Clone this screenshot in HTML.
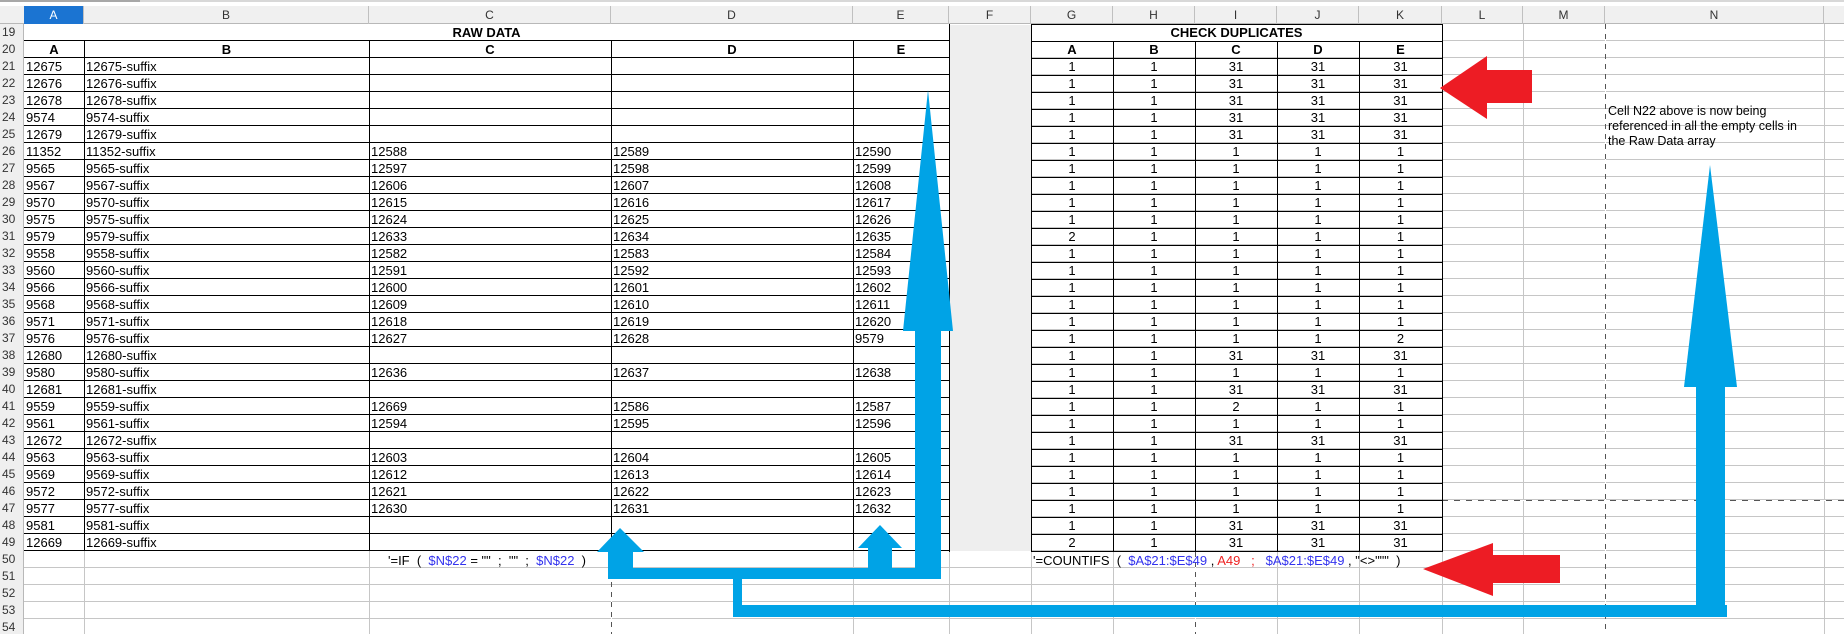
<!DOCTYPE html>
<html><head><meta charset="utf-8">
<style>
*{margin:0;padding:0;box-sizing:border-box}
body{width:1844px;height:634px;overflow:hidden;background:#fff;position:relative;font-family:"Liberation Sans",Arial,sans-serif;font-size:13px;color:#000}
.abs{position:absolute}
#topline{left:0;top:0;width:1844px;height:2px;background:#d8d8d8}
#topline2{left:0;top:0;width:140px;height:2px;background:#a8a8a8}
#colhdr{left:0;top:6px;width:1844px;height:18px;background:#f0f0f0;border-bottom:1px solid #b8b8b8}
.ch{position:absolute;top:6px;height:18px;line-height:18px;text-align:center;font-size:12px;color:#333;border-right:1px solid #c0c0c0}
#rowhdr{left:0;top:24px;width:24px;height:610px;background:#efefef;border-right:1px solid #b8b8b8}
.rn{position:absolute;left:2px;width:22px;height:17px;line-height:17px;font-size:12px;color:#333}
#grid{left:24px;top:24px;width:1820px;height:610px;
background-image:repeating-linear-gradient(to bottom,transparent 0,transparent 16px,#c6c6c6 16px,#c6c6c6 17px)}
.vl{position:absolute;width:1px;background:#c6c6c6;top:24px;height:610px}
.bl{position:absolute;background:#000}
.dv{position:absolute;width:1px;background-image:repeating-linear-gradient(to bottom,#555 0,#555 5px,transparent 5px,transparent 10px)}
#hd{left:1442px;top:500px;width:402px;height:1px;background-image:repeating-linear-gradient(to right,#555 0,#555 6px,transparent 6px,transparent 12px)}
#f{left:950px;top:25px;width:81px;height:526px;background:#eeeeee}
table{position:absolute;border-collapse:collapse;table-layout:fixed}
td{height:17px;line-height:17px;padding:0 0 0 2px;white-space:nowrap;overflow:hidden;vertical-align:middle}
.c td{text-align:center;padding:0}
.b{font-weight:bold;text-align:center;padding:0}
.bl2{color:#3333ee}.rd{color:#ee2222}
</style></head><body>
<div class="abs" id="topline"></div><div class="abs" id="topline2"></div>
<div class="abs" id="colhdr"></div>
<div class="ch" style="left:24px;width:60px;background:#1b74d2;color:#fff">A</div>
<div class="ch" style="left:84px;width:285px">B</div>
<div class="ch" style="left:369px;width:242px">C</div>
<div class="ch" style="left:611px;width:242px">D</div>
<div class="ch" style="left:853px;width:96px">E</div>
<div class="ch" style="left:949px;width:82px">F</div>
<div class="ch" style="left:1031px;width:82px">G</div>
<div class="ch" style="left:1113px;width:82px">H</div>
<div class="ch" style="left:1195px;width:82px">I</div>
<div class="ch" style="left:1277px;width:82px">J</div>
<div class="ch" style="left:1359px;width:83px">K</div>
<div class="ch" style="left:1442px;width:81px">L</div>
<div class="ch" style="left:1523px;width:82px">M</div>
<div class="ch" style="left:1605px;width:219px">N</div>
<div class="ch" style="left:1824px;width:20px;border-right:0"></div>

<div class="abs" id="grid"></div>
<div class="vl" style="left:84px"></div><div class="vl" style="left:369px"></div><div class="vl" style="left:611px"></div>
<div class="vl" style="left:853px"></div><div class="vl" style="left:949px"></div><div class="vl" style="left:1031px"></div>
<div class="vl" style="left:1113px"></div><div class="vl" style="left:1195px"></div><div class="vl" style="left:1277px"></div>
<div class="vl" style="left:1359px"></div><div class="vl" style="left:1442px"></div><div class="vl" style="left:1523px"></div>
<div class="vl" style="left:1605px"></div><div class="vl" style="left:1824px"></div>
<div class="abs" id="f"></div>
<div class="abs" style="left:24px;top:24px;width:925px;height:16px;background:#fff"></div>
<div class="abs" style="left:1032px;top:25px;width:410px;height:16px;background:#fff"></div>
<div class="dv" style="left:1605px;top:24px;height:610px;background-color:#fff"></div>
<div class="dv" style="left:611px;top:552px;height:82px;background-color:#fff"></div>
<div class="dv" style="left:1195px;top:552px;height:82px;background-color:#fff"></div>
<div class="abs" id="hd" style="background-color:#fff"></div>
<div class="abs" style="left:24px;top:40px;width:926px;height:512px;background-image:repeating-linear-gradient(to bottom,#000 0,#000 1px,transparent 1px,transparent 17px)"></div>
<div class="abs" style="left:1031px;top:24px;width:412px;height:528px;background-image:repeating-linear-gradient(to bottom,#000 0,#000 1px,transparent 1px,transparent 17px)"></div>
<div class="bl" style="left:84px;top:41px;width:1px;height:510px"></div>
<div class="bl" style="left:369px;top:41px;width:1px;height:510px"></div>
<div class="bl" style="left:611px;top:41px;width:1px;height:510px"></div>
<div class="bl" style="left:853px;top:41px;width:1px;height:510px"></div>
<div class="bl" style="left:949px;top:24px;width:1px;height:528px"></div>
<div class="bl" style="left:1031px;top:24px;width:1px;height:528px"></div>
<div class="bl" style="left:1113px;top:41px;width:1px;height:510px"></div>
<div class="bl" style="left:1195px;top:41px;width:1px;height:510px"></div>
<div class="bl" style="left:1277px;top:41px;width:1px;height:510px"></div>
<div class="bl" style="left:1359px;top:41px;width:1px;height:510px"></div>
<div class="bl" style="left:1442px;top:24px;width:1px;height:528px"></div>

<div class="abs" id="rowhdr"></div>
<div class="rn" style="top:24px">19</div><div class="rn" style="top:41px">20</div><div class="rn" style="top:58px">21</div><div class="rn" style="top:75px">22</div><div class="rn" style="top:92px">23</div><div class="rn" style="top:109px">24</div><div class="rn" style="top:126px">25</div><div class="rn" style="top:143px">26</div><div class="rn" style="top:160px">27</div><div class="rn" style="top:177px">28</div><div class="rn" style="top:194px">29</div><div class="rn" style="top:211px">30</div><div class="rn" style="top:228px">31</div><div class="rn" style="top:245px">32</div><div class="rn" style="top:262px">33</div><div class="rn" style="top:279px">34</div><div class="rn" style="top:296px">35</div><div class="rn" style="top:313px">36</div><div class="rn" style="top:330px">37</div><div class="rn" style="top:347px">38</div><div class="rn" style="top:364px">39</div><div class="rn" style="top:381px">40</div><div class="rn" style="top:398px">41</div><div class="rn" style="top:415px">42</div><div class="rn" style="top:432px">43</div><div class="rn" style="top:449px">44</div><div class="rn" style="top:466px">45</div><div class="rn" style="top:483px">46</div><div class="rn" style="top:500px">47</div><div class="rn" style="top:517px">48</div><div class="rn" style="top:534px">49</div><div class="rn" style="top:551px">50</div><div class="rn" style="top:568px">51</div><div class="rn" style="top:585px">52</div><div class="rn" style="top:602px">53</div><div class="rn" style="top:619px">54</div>

<div class="abs b" style="left:24px;top:24px;width:925px;height:17px;line-height:17px">RAW DATA</div>
<div class="abs b" style="left:1031px;top:24px;width:411px;height:17px;line-height:17px">CHECK DUPLICATES</div>

<table style="left:24px;top:41px;width:925px">
<colgroup><col style="width:60px"><col style="width:285px"><col style="width:242px"><col style="width:242px"><col style="width:96px"></colgroup>
<tr><td class="b">A</td><td class="b">B</td><td class="b">C</td><td class="b">D</td><td class="b">E</td></tr>
<tr><td>12675</td><td>12675-suffix</td><td></td><td></td><td></td></tr>
<tr><td>12676</td><td>12676-suffix</td><td></td><td></td><td></td></tr>
<tr><td>12678</td><td>12678-suffix</td><td></td><td></td><td></td></tr>
<tr><td>9574</td><td>9574-suffix</td><td></td><td></td><td></td></tr>
<tr><td>12679</td><td>12679-suffix</td><td></td><td></td><td></td></tr>
<tr><td>11352</td><td>11352-suffix</td><td>12588</td><td>12589</td><td>12590</td></tr>
<tr><td>9565</td><td>9565-suffix</td><td>12597</td><td>12598</td><td>12599</td></tr>
<tr><td>9567</td><td>9567-suffix</td><td>12606</td><td>12607</td><td>12608</td></tr>
<tr><td>9570</td><td>9570-suffix</td><td>12615</td><td>12616</td><td>12617</td></tr>
<tr><td>9575</td><td>9575-suffix</td><td>12624</td><td>12625</td><td>12626</td></tr>
<tr><td>9579</td><td>9579-suffix</td><td>12633</td><td>12634</td><td>12635</td></tr>
<tr><td>9558</td><td>9558-suffix</td><td>12582</td><td>12583</td><td>12584</td></tr>
<tr><td>9560</td><td>9560-suffix</td><td>12591</td><td>12592</td><td>12593</td></tr>
<tr><td>9566</td><td>9566-suffix</td><td>12600</td><td>12601</td><td>12602</td></tr>
<tr><td>9568</td><td>9568-suffix</td><td>12609</td><td>12610</td><td>12611</td></tr>
<tr><td>9571</td><td>9571-suffix</td><td>12618</td><td>12619</td><td>12620</td></tr>
<tr><td>9576</td><td>9576-suffix</td><td>12627</td><td>12628</td><td>9579</td></tr>
<tr><td>12680</td><td>12680-suffix</td><td></td><td></td><td></td></tr>
<tr><td>9580</td><td>9580-suffix</td><td>12636</td><td>12637</td><td>12638</td></tr>
<tr><td>12681</td><td>12681-suffix</td><td></td><td></td><td></td></tr>
<tr><td>9559</td><td>9559-suffix</td><td>12669</td><td>12586</td><td>12587</td></tr>
<tr><td>9561</td><td>9561-suffix</td><td>12594</td><td>12595</td><td>12596</td></tr>
<tr><td>12672</td><td>12672-suffix</td><td></td><td></td><td></td></tr>
<tr><td>9563</td><td>9563-suffix</td><td>12603</td><td>12604</td><td>12605</td></tr>
<tr><td>9569</td><td>9569-suffix</td><td>12612</td><td>12613</td><td>12614</td></tr>
<tr><td>9572</td><td>9572-suffix</td><td>12621</td><td>12622</td><td>12623</td></tr>
<tr><td>9577</td><td>9577-suffix</td><td>12630</td><td>12631</td><td>12632</td></tr>
<tr><td>9581</td><td>9581-suffix</td><td></td><td></td><td></td></tr>
<tr><td>12669</td><td>12669-suffix</td><td></td><td></td><td></td></tr>
</table>

<table class="c" style="left:1031px;top:41px;width:411px">
<colgroup><col style="width:82px"><col style="width:82px"><col style="width:82px"><col style="width:82px"><col style="width:83px"></colgroup>
<tr><td class="b">A</td><td class="b">B</td><td class="b">C</td><td class="b">D</td><td class="b">E</td></tr>
<tr><td>1</td><td>1</td><td>31</td><td>31</td><td>31</td></tr>
<tr><td>1</td><td>1</td><td>31</td><td>31</td><td>31</td></tr>
<tr><td>1</td><td>1</td><td>31</td><td>31</td><td>31</td></tr>
<tr><td>1</td><td>1</td><td>31</td><td>31</td><td>31</td></tr>
<tr><td>1</td><td>1</td><td>31</td><td>31</td><td>31</td></tr>
<tr><td>1</td><td>1</td><td>1</td><td>1</td><td>1</td></tr>
<tr><td>1</td><td>1</td><td>1</td><td>1</td><td>1</td></tr>
<tr><td>1</td><td>1</td><td>1</td><td>1</td><td>1</td></tr>
<tr><td>1</td><td>1</td><td>1</td><td>1</td><td>1</td></tr>
<tr><td>1</td><td>1</td><td>1</td><td>1</td><td>1</td></tr>
<tr><td>2</td><td>1</td><td>1</td><td>1</td><td>1</td></tr>
<tr><td>1</td><td>1</td><td>1</td><td>1</td><td>1</td></tr>
<tr><td>1</td><td>1</td><td>1</td><td>1</td><td>1</td></tr>
<tr><td>1</td><td>1</td><td>1</td><td>1</td><td>1</td></tr>
<tr><td>1</td><td>1</td><td>1</td><td>1</td><td>1</td></tr>
<tr><td>1</td><td>1</td><td>1</td><td>1</td><td>1</td></tr>
<tr><td>1</td><td>1</td><td>1</td><td>1</td><td>2</td></tr>
<tr><td>1</td><td>1</td><td>31</td><td>31</td><td>31</td></tr>
<tr><td>1</td><td>1</td><td>1</td><td>1</td><td>1</td></tr>
<tr><td>1</td><td>1</td><td>31</td><td>31</td><td>31</td></tr>
<tr><td>1</td><td>1</td><td>2</td><td>1</td><td>1</td></tr>
<tr><td>1</td><td>1</td><td>1</td><td>1</td><td>1</td></tr>
<tr><td>1</td><td>1</td><td>31</td><td>31</td><td>31</td></tr>
<tr><td>1</td><td>1</td><td>1</td><td>1</td><td>1</td></tr>
<tr><td>1</td><td>1</td><td>1</td><td>1</td><td>1</td></tr>
<tr><td>1</td><td>1</td><td>1</td><td>1</td><td>1</td></tr>
<tr><td>1</td><td>1</td><td>1</td><td>1</td><td>1</td></tr>
<tr><td>1</td><td>1</td><td>31</td><td>31</td><td>31</td></tr>
<tr><td>2</td><td>1</td><td>31</td><td>31</td><td>31</td></tr>
</table>

<div class="abs" style="left:388px;top:552px;height:17px;line-height:17px;white-space:pre">'=IF  (  <span class="bl2">$N$22</span> = ""  ;  ""  ;  <span class="bl2">$N$22</span>  )</div>
<div class="abs" style="left:1033px;top:552px;height:17px;line-height:17px;white-space:pre">'=COUNTIFS  (  <span class="bl2">$A$21:$E$49</span> , <span class="rd">A49   ;</span>   <span class="bl2">$A$21:$E$49</span> , "&lt;&gt;"""  )</div>

<div class="abs" style="left:1608px;top:104px;width:204px;font-size:12.5px;line-height:15px">Cell N22 above is now being referenced in all the empty cells in the Raw Data array</div>

<svg class="abs" style="left:0;top:0" width="1844" height="634" viewBox="0 0 1844 634">
<g fill="#00a3e6">
<polygon points="928,90 953,331 903,331"/>
<rect x="915" y="330" width="26" height="249"/>
<rect x="608" y="568" width="333" height="11"/>
<polygon points="620,528 644,552 597,552"/>
<rect x="608" y="551" width="25" height="18"/>
<polygon points="880,525 902,548 858,548"/>
<rect x="868" y="547" width="24" height="22"/>
<rect x="733" y="578" width="9" height="39"/>
<rect x="733" y="605" width="994" height="12"/>
<rect x="1696" y="386" width="29" height="231"/>
<polygon points="1710,165 1737,387 1684,387"/>
</g>
<g fill="#ed1c24">
<polygon points="1440,88 1487,56 1487,70 1532,70 1532,103 1487,103 1487,119"/>
<polygon points="1423,569 1493,543 1493,555 1560,555 1560,583 1493,583 1493,596"/>
</g>
</svg>
</body></html>
